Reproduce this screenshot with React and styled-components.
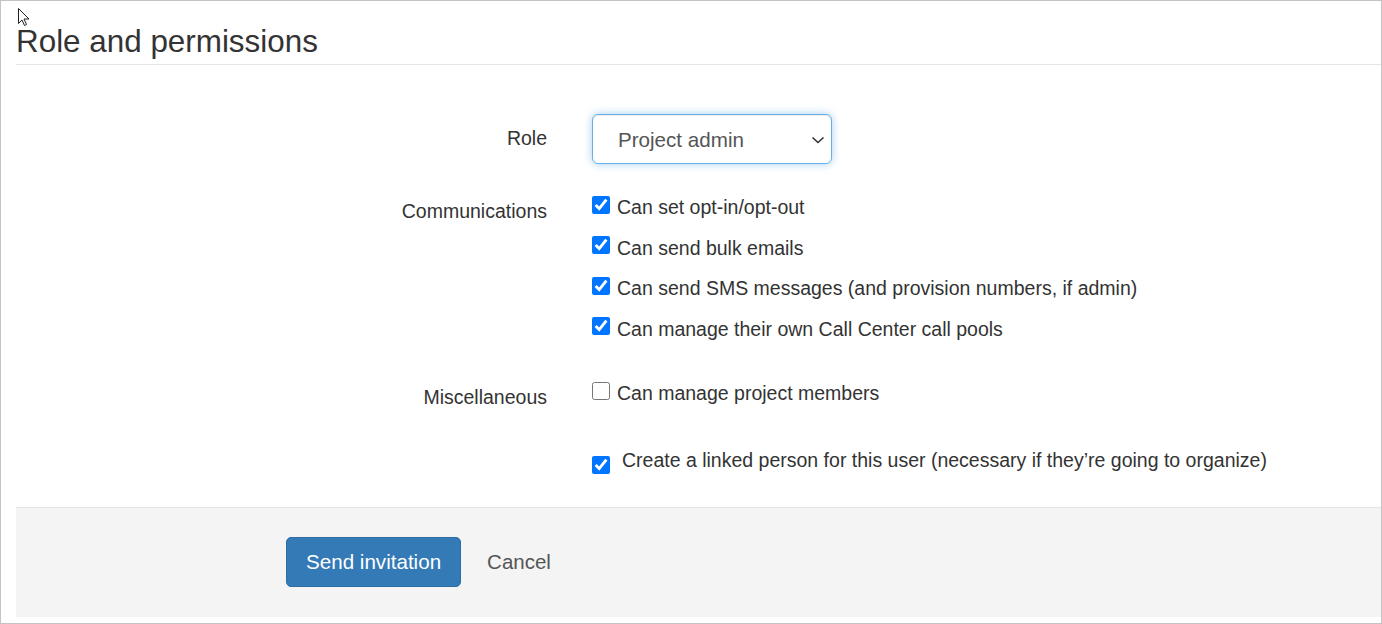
import React from 'react';
import styled, { createGlobalStyle } from 'styled-components';

const GlobalStyle = createGlobalStyle`
  html, body {
    margin: 0;
    padding: 0;
    background: #fff;
  }
  body {
    font-family: "Liberation Sans", Arial, sans-serif;
    color: #333;
  }
`;

const Frame = styled.div`
  position: relative;
  box-sizing: border-box;
  height: 624px;
  border: 1px solid #c4c4c4;
  padding: 0 0 6px 15px;
  display: flex;
  flex-direction: column;
`;

const Heading = styled.h2`
  margin: 0;
  padding: 24px 0 4.4px;
  font-size: 31.4px;
  font-weight: 400;
  line-height: 1.1;
  color: #333;
  border-bottom: 1px solid #e5e5e5;
`;

const Form = styled.div`
  flex: 1;
  padding-top: 49px;
`;

const Row = styled.div`
  display: grid;
  grid-template-columns: 531px 1fr;
  column-gap: 45px;
  margin-top: ${p => p.$space || 0}px;
`;

const Label = styled.div`
  text-align: right;
  font-size: 19.5px;
  line-height: 28px;
  padding-top: ${p => p.$top || 0}px;
  color: #333;
`;

const SelectWrap = styled.div`
  position: relative;
  width: 240px;
  height: 50px;
`;

const Select = styled.select`
  appearance: none;
  box-sizing: border-box;
  width: 100%;
  height: 100%;
  border: 1px solid #66afe9;
  border-radius: 6px;
  background: #fff;
  box-shadow: inset 0 1px 1px rgba(0, 0, 0, .075), 0 0 8px rgba(102, 175, 233, .6);
  padding: 2px 0 0 25px;
  font-family: "Liberation Sans", Arial, sans-serif;
  font-size: 20.6px;
  color: #555;
  outline: none;
`;

const Chevron = styled.svg`
  position: absolute;
  right: 7px;
  top: 22px;
  pointer-events: none;
`;

const CheckList = styled.div`
  display: flex;
  flex-direction: column;
  gap: 12.5px;
`;

const CheckItem = styled.label`
  display: flex;
  align-items: flex-start;
  font-size: 19.5px;
  line-height: 28px;
  color: #333;
`;

const Box = styled.input`
  width: 18px;
  height: 18px;
  margin: ${p => p.$offset}px ${p => p.$gap}px 0 0;
  flex: none;
`;

const Footer = styled.div`
  box-sizing: border-box;
  height: 110px;
  border-top: 1px solid #e5e5e5;
  background: #f4f4f4;
  padding: 29px 0 0 270px;
`;

const Actions = styled.div`
  display: flex;
  align-items: center;
  gap: 26px;
`;

const PrimaryButton = styled.button`
  box-sizing: border-box;
  height: 50px;
  padding: 0 19px;
  border: 1px solid #2e6da4;
  border-radius: 5px;
  background: #337ab7;
  color: #fff;
  font-family: "Liberation Sans", Arial, sans-serif;
  font-size: 20.6px;
`;

const CancelLink = styled.a`
  font-size: 20.5px;
  color: #555;
  text-decoration: none;
`;

const Cursor = styled.svg`
  position: absolute;
  left: 17px;
  top: 7px;
`;

const communications = [
  'Can set opt-in/opt-out',
  'Can send bulk emails',
  'Can send SMS messages (and provision numbers, if admin)',
  'Can manage their own Call Center call pools',
];

function Check({ checked, children, offset = 2.5, gap = 7 }) {
  return (
    <CheckItem>
      <Box type="checkbox" defaultChecked={checked} $offset={offset} $gap={gap} />
      <span>{children}</span>
    </CheckItem>
  );
}

export default function App() {
  return (
    <>
      <GlobalStyle />
      <Frame>
        <Heading>Role and permissions</Heading>
        <Form>
          <Row>
            <Label $top={10.5}>Role</Label>
            <SelectWrap>
              <Select defaultValue="admin">
                <option value="admin">Project admin</option>
                <option value="member">Project member</option>
              </Select>
              <Chevron width="14" height="8" viewBox="0 0 14 8">
                <path d="M1.5 1.5 L7 6.5 L12.5 1.5" fill="none" stroke="#333" strokeWidth="1.6" />
              </Chevron>
            </SelectWrap>
          </Row>
          <Row $space={29.5}>
            <Label $top={4}>Communications</Label>
            <CheckList>
              {communications.map(text => (
                <Check key={text} checked>{text}</Check>
              ))}
            </CheckList>
          </Row>
          <Row $space={36.5}>
            <Label $top={4}>Miscellaneous</Label>
            <CheckList>
              <Check checked={false}>Can manage project members</Check>
            </CheckList>
          </Row>
          <Row $space={35}>
            <div />
            <CheckList>
              <Check checked offset={9.5} gap={12}>
                Create a linked person for this user (necessary if they’re going to organize)
              </Check>
            </CheckList>
          </Row>
        </Form>
        <Footer>
          <Actions>
            <PrimaryButton>Send invitation</PrimaryButton>
            <CancelLink href="#">Cancel</CancelLink>
          </Actions>
        </Footer>
        <Cursor width="12" height="19" viewBox="0 0 12 19">
          <path d="M0.5 0.5 L0.5 15.5 L4 12 L6.5 17.5 L8.5 16.5 L6 11 L11 11 Z" fill="#fff" stroke="#222" strokeWidth="1" strokeLinejoin="round" />
        </Cursor>
      </Frame>
    </>
  );
}
